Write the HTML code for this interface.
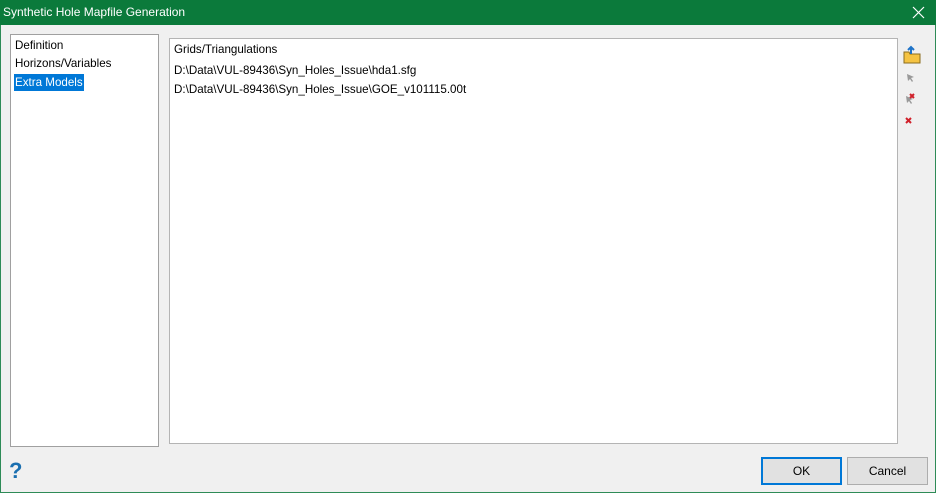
<!DOCTYPE html>
<html><head><style>
*{margin:0;padding:0;box-sizing:border-box}
body{width:936px;height:493px;background:#f0f0f0;font-family:"Liberation Sans",sans-serif;font-size:11.6px;color:#000;position:relative;overflow:hidden}
.frame{position:absolute;left:0;top:0;width:936px;height:493px;border:1px solid #2e8b57}
.title{position:absolute;left:0;top:0;width:936px;height:25px;background:#0b7a3b;color:#fff;font-size:12px;line-height:25px;padding-left:3px}
.x{position:absolute;left:912px;top:6px}
.list{position:absolute;left:10px;top:34px;width:149px;height:413px;background:#fff;border:1px solid #a0a0a0}
.list div{position:absolute;left:3px;height:17px;line-height:17px;padding:0 1px}
.panel{position:absolute;left:169px;top:38px;width:729px;height:406px;background:#fff;border:1px solid #b4b4b4}
.panel div{position:absolute;left:4px}
.btn{position:absolute;top:457px;width:81px;height:28px;background:#e1e1e1;border:1px solid #adadad;text-align:center;line-height:26px;font-size:12px}
</style></head><body>
<div class="frame"></div>
<div class="title">Synthetic Hole Mapfile Generation</div>
<svg class="x" width="13" height="13"><path d="M1 1l11 11M12 1L1 12" stroke="#fff" stroke-width="1.2"/></svg>
<div class="list">
<div style="top:2px">Definition</div>
<div style="top:20px">Horizons/Variables</div>
<div style="top:39px;background:#0078d7;color:#fff">Extra Models</div>
</div>
<div class="panel">
<div style="top:4px">Grids/Triangulations</div>
<div style="top:25px">D:\Data\VUL-89436\Syn_Holes_Issue\hda1.sfg</div>
<div style="top:44px">D:\Data\VUL-89436\Syn_Holes_Issue\GOE_v101115.00t</div>
</div>
<svg style="position:absolute;left:903px;top:45px" width="20" height="85">
<path d="M1 7h5l1 2h10v9H1z" fill="#f5c342" stroke="#8a6d1e" stroke-width="1"/>
<path d="M8 9V3M5 5l3-3 3 3" stroke="#1e73c8" stroke-width="2" fill="none"/>
<path d="M4 29l7 3-3 1 2 3-1 1-2-3-2 2z" fill="#999"/>
<path d="M3 51l7 3-3 1 2 3-1 1-2-3-2 2z" fill="#999"/>
<path d="M7 49l4 4M11 49l-4 4" stroke="#d0202a" stroke-width="2"/>
<path d="M3 73l5 5M8 73l-5 5" stroke="#d0202a" stroke-width="2"/>
</svg>
<div style="position:absolute;left:9px;top:458px;font-size:22px;font-weight:bold;color:#1a6fb0">?</div>
<div class="btn" style="left:761px;border:1px solid #0078d7;box-shadow:inset 0 0 0 1px #0078d7">OK</div>
<div class="btn" style="left:847px">Cancel</div>
</body></html>
